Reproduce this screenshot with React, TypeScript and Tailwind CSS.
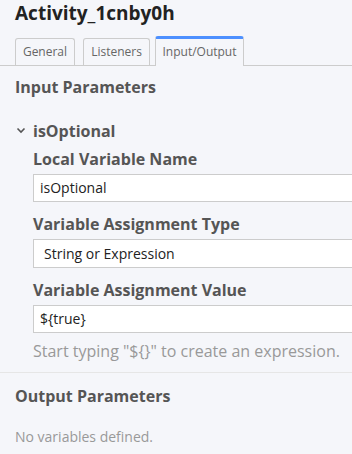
import { FC } from "react";

const Label: FC<{ text: string }> = ({ text }) => (
  <div className="text-[16px] font-bold leading-[22px] text-[#555]">{text}</div>
);

const Field: FC<{ value: string; pad?: string; tall?: boolean }> = ({ value, pad, tall }) => (
  <div
    className={
      tall
        ? "mt-[4px] h-[29px] border border-[#ccc] bg-white pl-[10px] text-[14px] leading-[27px] text-[#222]"
        : "mt-[4px] h-[28px] border border-[#ccc] bg-white pl-[6px] text-[14px] leading-[26px] text-[#222]"
    }
  >
    {value}
    {pad}
  </div>
);

const App: FC = () => {
  return (
    <main
      className="w-[352px] h-[454px] overflow-hidden bg-[#f5f6fa] text-[#555]"
      style={{ fontFamily: '"Open Sans", sans-serif' }}
    >
      <h1 className="pl-[15px] pt-[1px] text-[19px] font-bold leading-[24px] text-[#222]">
        Activity_1cnby0h
      </h1>

      <div className="flex items-end mt-[11px] pl-[15px] border-b border-[#ccc] h-[30px]">
        <div className="w-[60px] h-[27px] text-center border border-b-0 border-[#ccc] rounded-t-[3px] text-[12px] leading-[25px] text-[#666]">
          General
        </div>
        <div className="ml-[8px] w-[67px] h-[27px] text-center border border-b-0 border-[#ccc] rounded-t-[3px] text-[12px] leading-[25px] text-[#666]">
          Listeners
        </div>
        <div className="ml-[5px] -mb-px w-[89px] h-[30px] text-center border border-b-0 border-[#ccc] border-t-[3px] border-t-[#4d90ff] rounded-t-[3px] bg-[#f5f6fa] text-[12px] leading-[25px] text-[#666]">
          Input/Output
        </div>
      </div>

      <section className="px-[15px] pt-[10px] pb-[10px] border-b border-[#e6e6e6]">
        <div className="text-[16px] font-bold leading-[22px]">Input Parameters</div>
        <div className="mt-[22px] flex items-center">
          <svg width="18" height="22" viewBox="0 0 18 22">
            <path d="M2.5 8.5 L6 12 L9.5 8.5" fill="none" stroke="#555" strokeWidth="1.6" />
          </svg>
          <span className="text-[16px] font-bold leading-[22px]">isOptional</span>
        </div>
        <div className="pl-[18px] mt-[6px] -mr-[20px]">
          <Label text="Local Variable Name" />
          <Field value="isOptional" />
          <div className="mt-[11px]">
            <Label text="Variable Assignment Type" />
          </div>
          <Field value="String or Expression" tall />
          <div className="mt-[11px]">
            <Label text="Variable Assignment Value" />
          </div>
          <Field value={"${true}"} />
          <div className="mt-[7px] text-[16px] leading-[22px] text-[#999]">
            Start typing "{"${}"}" to create an expression.
          </div>
        </div>
      </section>

      <section className="px-[15px] pt-[12px]">
        <div className="text-[16px] font-bold leading-[22px]">Output Parameters</div>
        <div className="mt-[20px] text-[14px] leading-[20px] text-[#999]">No variables defined.</div>
      </section>
    </main>
  );
};

export default App;
